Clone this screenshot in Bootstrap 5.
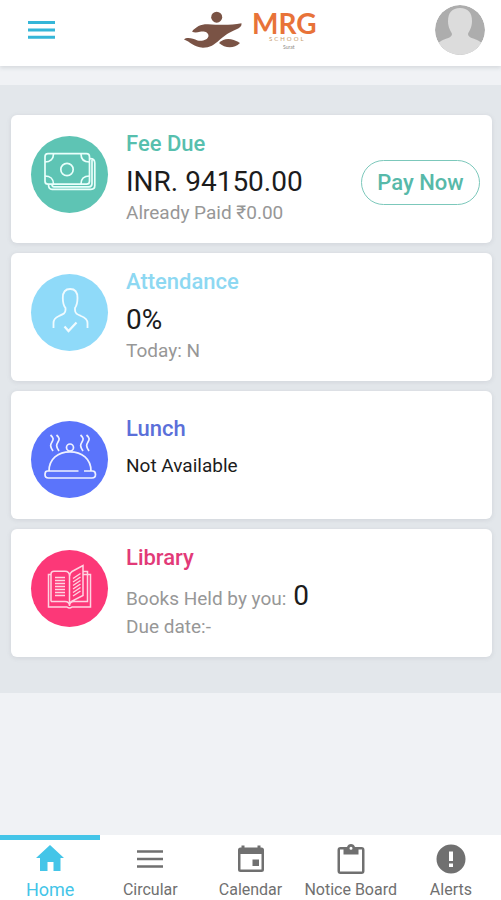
<!DOCTYPE html>
<html lang="en">
<head>
<meta charset="utf-8">
<meta name="viewport" content="width=device-width, initial-scale=1">
<title>MRG School</title>
<link href="https://cdn.jsdelivr.net/npm/bootstrap@5.3.0/dist/css/bootstrap.min.css" rel="stylesheet">
<style>
body { font-family: Roboto, "Liberation Sans", sans-serif; background: #f0f2f5; color: #1c1c1c; }
.app-header { height: 66px; padding: 0 16px 6px 26px; box-shadow: 0 2px 4px rgba(60,70,80,.14); }
.menu-btn { color: #35b6d8; }
.brand-logo { margin-left: 10px; }
.dash { margin-top: 19px; padding: 30px 9px 36px 11px; background: #e3e7eb; }
.stack { gap: 10px; }
.tile { min-height: 128px; padding: 15px 12px 15px 20px; border-radius: 6px; box-shadow: 0 1px 5px rgba(90,100,110,.14); column-gap: 18px; }
.tile-lunch { padding-top: 24px; }
.disc { width: 77px; height: 77px; margin-top: 6px; }
.tile-title { font-size: 22px; line-height: 28px; font-weight: 500; margin-bottom: 6px; }
.tile-lunch .tile-title { margin-bottom: 10px; }
.figure-line { font-size: 28px; line-height: 36px; }
.note { font-size: 19px; line-height: 26px; }
.soft { color: #979797; }
.teal { color: #57bfae; } .bg-teal { background: #5ec4b4; }
.sky { color: #8dd8f2; } .bg-sky { background: #8fdaf9; }
.indigo { color: #5b6fd9; } .bg-indigo { background: #5b74fb; }
.rose { color: #e23a78; } .bg-rose { background: #fc3878; }
.pay { height: 45px; width: 119px; margin-top: 7px; font-size: 22px; font-weight: 500; color: #57b9a9; border: 1px solid #7cc8bb; }
.tabs { height: 65px; }
.tab-link { color: #707070; font-size: 16px; line-height: 20px; border-top: 5px solid transparent; padding-top: 4px; }
.tab-link.active { color: #44c5e8; border-top-color: #44c5e8; }
.tab-link.active span { font-size: 18px; }
.tab-link svg { margin-bottom: 6px; }
</style>
</head>
<body class="d-flex flex-column min-vh-100">
<header class="app-header bg-white d-flex align-items-center justify-content-between">
  <button type="button" class="menu-btn btn p-0 border-0 lh-1" aria-label="Menu">
    <svg width="30" height="22" viewBox="0 0 30 22"><path d="M2 3.500H29M2 11H29M2 18.300H29" stroke="currentColor" stroke-width="3"/></svg>
  </button>
  <svg class="brand-logo" width="136" height="52" viewBox="183 4 136 52" role="img" aria-label="MRG School">
    <g fill="#7a5345"><circle cx="216.700" cy="17.200" r="5.500"/>
    <path d="M192 31.500C196 26.500 201 24 208 24.200C218 24.800 230 25.500 241.500 23.300C242 26 240 28 236 29.500C230 32 226 34.500 220 39.500C214 45 210 47.700 203 47.700C194 47.500 190 41.500 184 39.500C187 36.500 193 38.500 197.500 40.500C202 41.500 208 40 208.500 36C208.500 32 204 31 200 31.800C197 32.800 194 33 192 31.500Z"/>
    <path d="M219 43C224 38 231 37.500 240 43C234 49 225 48.500 219 43Z"/></g>
    <text x="252" y="34" font-family="Lato, sans-serif" font-size="28" font-weight="700" fill="#e87339">MRG</text>
    <text x="269" y="41" font-family="Lato, sans-serif" font-size="6" letter-spacing="2" fill="#c69a6c">SCHOOL</text>
    <text x="283" y="49" font-family="Lato, sans-serif" font-size="5" fill="#8b8580">Surat</text>
  </svg>
  <button type="button" class="btn p-0 border-0 lh-1 rounded-circle overflow-hidden" aria-label="Profile">
    <svg class="d-block" width="50" height="50" viewBox="0 0 50 50"><defs><clipPath id="face"><circle cx="25" cy="25" r="25"/></clipPath></defs><g clip-path="url(#face)"><path fill="#adadad" d="M0 0H50V50H0Z"/><path fill="#dcdcdc" d="M25 3C33 3 37 8 37 16C37 23 34 26 33 29C33 33 39 33 44 36C47 38 49 40 50 43V50H0V43C1 40 3 38 6 36C11 33 17 33 17 29C16 26 13 23 13 16C13 8 17 3 25 3Z"/></g></svg>
  </button>
</header>

<main class="dash">
  <div class="stack d-flex flex-column">
    <section class="tile bg-white d-flex align-items-start">
      <div class="disc bg-teal rounded-circle flex-shrink-0">
        <svg class="d-block" width="77" height="77" viewBox="31 136 77 77" fill="none" stroke="#e9fffb" stroke-width="1.700">
          <rect x="45" y="153.700" width="44.500" height="30.500" rx="3"/><circle cx="67" cy="169.500" r="6.200"/>
          <path d="M53.500 154C53.500 159 50 162 45 162M81 154C81 159 84 162 89.500 162M45 176C50 176 53.500 179 53.500 184M89.500 176C84 176 81 179 81 184M48.500 184.500C48.500 187 49.500 189.300 52 189.300H91C93.500 189.300 94.800 188 94.800 185.500V163C94.800 160 93 158.700 90 158.700M52 184.500Q52 186.800 54 186.800H89Q92 186.800 92 183.500V160"/>
        </svg>
      </div>
      <div class="flex-grow-1">
        <h2 class="tile-title teal">Fee Due</h2>
        <div class="figure-line">INR. 94150.00</div>
        <div class="note soft">Already Paid ₹0.00</div>
      </div>
      <button type="button" class="pay btn rounded-pill p-0 align-self-center flex-shrink-0">Pay Now</button>
    </section>

    <section class="tile bg-white d-flex align-items-start">
      <div class="disc bg-sky rounded-circle flex-shrink-0">
        <svg class="d-block" width="77" height="77" viewBox="31 274 77 77" fill="none" stroke="#f0fbff" stroke-width="1.800">
          <path d="M53.500 328V323C53.500 319 55.500 317.500 59 316C63 314.300 65.500 313.500 65.500 310V308C63.500 305.500 62.800 303 62.800 298C62.800 292 65.500 289 70.200 289C75 289 77.500 292 77.500 298C77.500 303 76.700 305.500 75 308V310C75 313.500 77 314.300 81 316C85 317.500 87.500 319 87.500 323V328"/><path d="M64.500 326.500L68.500 331L76.500 322.500" stroke-width="2.200"/>
        </svg>
      </div>
      <div>
        <h2 class="tile-title sky">Attendance</h2>
        <div class="figure-line">0%</div>
        <div class="note soft">Today: N</div>
      </div>
    </section>

    <section class="tile tile-lunch bg-white d-flex align-items-start">
      <div class="disc bg-indigo rounded-circle flex-shrink-0">
        <svg class="d-block" width="77" height="77" viewBox="31 421 77 77" fill="none" stroke="#eef1ff" stroke-width="1.700">
          <path d="M49 471C49 459 58 451.800 70 451.800S91 459 91 471M78.500 471H47.500Q45 471 45 474.500T48.500 478H92Q95.500 478 95.500 474.500T92.500 471H84"/><circle cx="70" cy="447.500" r="3.500"/>
          <path d="M50.500 435C54 438 53.500 439.500 52 442S49.500 446 53 451M56.500 435C60 438 59.500 439.500 58 442S55.500 446 59 451M80.500 435C84 438 83.500 439.500 82 442S79.500 446 83 451M86.500 435C90 438 89.500 439.500 88 442S85.500 446 89 451"/>
        </svg>
      </div>
      <div>
        <h2 class="tile-title indigo">Lunch</h2>
        <div class="note">Not Available</div>
      </div>
    </section>

    <section class="tile bg-white d-flex align-items-start">
      <div class="disc bg-rose rounded-circle flex-shrink-0">
        <svg class="d-block" width="77" height="77" viewBox="31 549 77 77" fill="none" stroke="#ffd3e1" stroke-width="1.500">
          <path d="M51 600.500V573Q51 570.200 54 570.200H65Q69.500 570.200 69.500 575V600Q69.500 602.500 72 600L83 594.500V564.500L72 570.500Q69.700 572 69.700 575M51 573.500H48.500V606H67Q69.500 608 72 606H90.500V573.500H83M51 600.500H65Q69.500 600.500 69.500 605Q69.500 600.500 74 600.500H87.500V570.500H83"/>
          <path d="M55 576.500H65M55 579.500H65M55 582.500H65M55 585.500H65M55 588.500H65M55 591.500H65M55 594.500H65M73 577.500L80.500 572.500M73 581L80.500 576M73 584.500L80.500 579.500M73 588L80.500 583M73 591.500L80.500 586.500M73 595L80.500 590"/>
        </svg>
      </div>
      <div>
        <h2 class="tile-title rose">Library</h2>
        <div class="figure-line"><span class="note soft">Books Held by you:</span> 0</div>
        <div class="note soft">Due date:-</div>
      </div>
    </section>
  </div>
</main>

<nav class="tabs bg-white d-flex mt-auto sticky-bottom" aria-label="Main">
  <a href="#" class="tab-link active col d-flex flex-column align-items-center text-decoration-none text-nowrap" aria-current="page">
    <svg width="30" height="30" viewBox="0 0 30 30"><path fill="currentColor" d="M15 1L29 14H25.500V27H18.500V18H12.500V27H5V14H1Z"/></svg><span>Home</span></a>
  <a href="#" class="tab-link col d-flex flex-column align-items-center text-decoration-none text-nowrap">
    <svg width="30" height="30" viewBox="0 0 30 30"><path stroke="currentColor" stroke-width="2.500" d="M2 7.500H28M2 15H28M2 22.500H28"/></svg><span>Circular</span></a>
  <a href="#" class="tab-link col d-flex flex-column align-items-center text-decoration-none text-nowrap">
    <svg width="30" height="30" viewBox="0 0 30 30"><path fill="currentColor" fill-rule="evenodd" d="M5.500 1.500H8.500V3.500H21.500V1.500H24.500V3.500H25.500Q28 3.500 28 6V25.500Q28 28 25.500 28H4.500Q2 28 2 25.500V6Q2 3.500 4.500 3.500H5.500ZM4.500 10V25.500H25.500V10ZM16.500 15.500H23V22H16.500Z"/></svg><span>Calendar</span></a>
  <a href="#" class="tab-link col d-flex flex-column align-items-center text-decoration-none text-nowrap">
    <svg width="30" height="30" viewBox="0 0 30 30"><path fill="currentColor" fill-rule="evenodd" d="M11 3Q12 0 15 0T19 3H25.500Q28.500 3 28.500 6V27Q28.500 30 25.500 30H4.500Q1.500 30 1.500 27V6Q1.500 3 4.500 3ZM4 5.500V27.500H26V5.500H22.500V10.500H7.500V5.500ZM15 2.700A1.500 1.500 0 1 0 15 5.700A1.500 1.500 0 1 0 15 2.700Z"/></svg><span>Notice Board</span></a>
  <a href="#" class="tab-link col d-flex flex-column align-items-center text-decoration-none text-nowrap">
    <svg width="30" height="30" viewBox="0 0 30 30"><path fill="currentColor" fill-rule="evenodd" d="M15 .500A14.500 14.500 0 1 0 15 29.500A14.500 14.500 0 1 0 15 .500ZM13 7.500H17V17H13ZM13 19.500H17V23H13Z"/></svg><span>Alerts</span></a>
</nav>
<script src="https://cdn.jsdelivr.net/npm/bootstrap@5.3.0/dist/js/bootstrap.bundle.min.js"></script>
</body>
</html>
